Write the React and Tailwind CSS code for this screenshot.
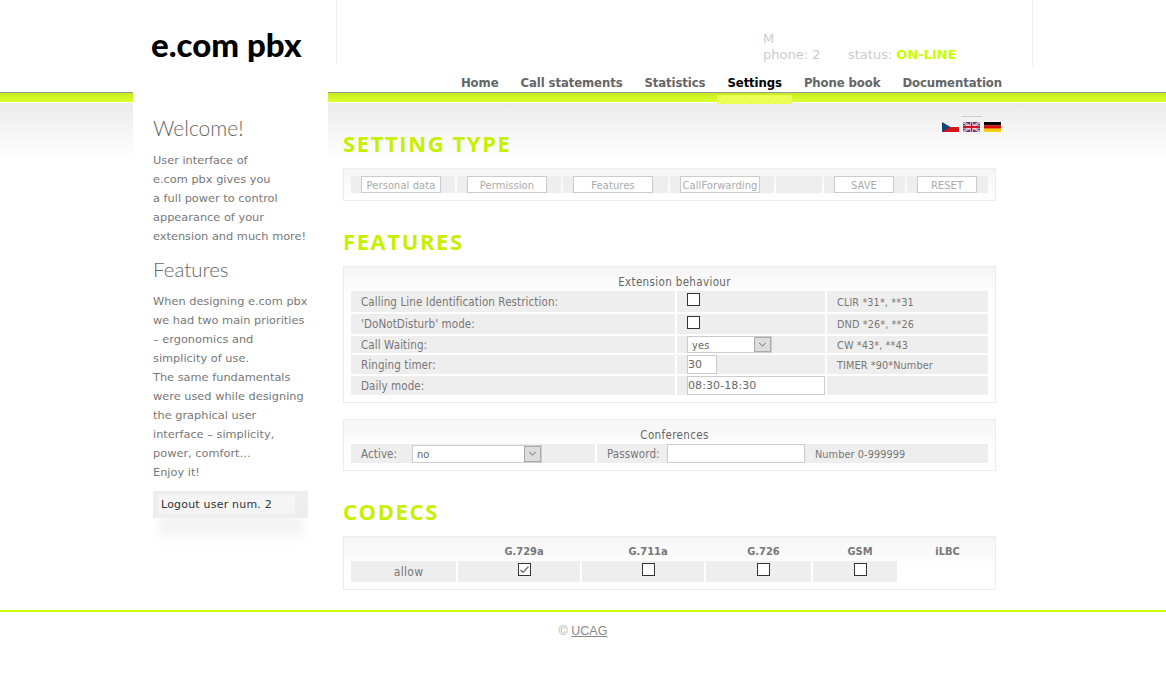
import React from "react";

const COND = "font-['DejaVu_Sans_Condensed','DejaVu_Sans',sans-serif]";

const Box = ({ checked }) => (
  <span className="block w-[13px] h-[13px] border border-[#333] bg-white">
    {checked && (
      <svg viewBox="0 0 11 11" className="block w-[11px] h-[11px]">
        <path d="M1.5 6 L4 8.5 L9.5 2.5" fill="none" stroke="#666" strokeWidth="1.2" />
      </svg>
    )}
  </span>
);

const FakeSelect = ({ value, className }) => (
  <div className={`flex items-center bg-white border border-[#ccc] ${className}`}>
    <span className="flex-1 pl-[4px] pt-[1px] text-[11px] text-[#666]">{value}</span>
    <span className="flex items-center justify-center w-[17px] h-full bg-[#ddd] border border-[#aaa]">
      <svg viewBox="0 0 10 6" className="w-[9px] h-[5px]">
        <path d="M1 1 L5 5 L9 1" fill="none" stroke="#555" strokeWidth="1" />
      </svg>
    </span>
  </div>
);

const Field = ({ value, className }) => (
  <input
    readOnly
    value={value}
    className={`bg-white border border-[#ccc] text-[11px] leading-[13px] text-[#666] px-0 outline-none font-['DejaVu_Sans',sans-serif] ${className}`}
  />
);

const Btn = ({ children, w }) => (
  <span className={`flex items-center justify-center h-[17px] pt-[2px] ${w} border border-[#ccc] bg-white ${COND} text-[11px] text-[#aaa]`}>{children}</span>
);

const Heading = ({ children, className }) => (
  <h2 className={`font-['Open_Sans',sans-serif] font-bold text-[22px] leading-[24px] tracking-[1.6px] text-[#c6f000] pb-[13px] ${className}`}>{children}</h2>
);

const Panel = ({ children, className = "" }) => (
  <div className={`border border-[#ececec] px-[7px] pb-[7px] bg-[linear-gradient(to_bottom,#f5f5f5_0,#fff_30px)] ${className}`}>{children}</div>
);

const PanelTitle = ({ children }) => (
  <div className={`pt-[9px] pb-[3px] pl-[10px] leading-[12px] ${COND} text-[11.5px] text-center text-[#666] tracking-[0.35px]`}>{children}</div>
);

const Cell = ({ children, className = "" }) => (
  <div className={`bg-[#eeeeee] pl-[10px] flex items-center text-[#777] ${COND} text-[11.5px] leading-[13px] tracking-[0.1px] ${className}`}>{children}</div>
);

const CZ = () => (
  <svg viewBox="0 0 17 10" className="w-[17px] h-[10px]">
    <rect width="17" height="5" fill="#f2f2f2" />
    <rect y="5" width="17" height="5" fill="#d7141a" />
    <path d="M0 0 L8.5 5 L0 10Z" fill="#11457e" />
  </svg>
);
const UK = () => (
  <svg viewBox="0 0 17 10" className="w-[17px] h-[10px]">
    <rect width="17" height="10" fill="#2a3f85" />
    <path d="M0 0 L17 10 M17 0 L0 10" stroke="#fff" strokeWidth="2" />
    <path d="M0 0 L17 10 M17 0 L0 10" stroke="#cf142b" strokeWidth="0.7" />
    <path d="M8.5 0 V10 M0 5 H17" stroke="#fff" strokeWidth="3.2" />
    <path d="M8.5 0 V10 M0 5 H17" stroke="#cf142b" strokeWidth="1.8" />
  </svg>
);
const DE = () => (
  <svg viewBox="0 0 17 10" className="w-[17px] h-[10px]">
    <rect width="17" height="3.4" fill="#000" />
    <rect y="3.4" width="17" height="3.3" fill="#dd0000" />
    <rect y="6.7" width="17" height="3.3" fill="#ffce00" />
  </svg>
);

const nav = ["Home", "Call statements", "Statistics", "Settings", "Phone book", "Documentation"];

const featureRows = [
  { h: "h-[21px]", pt: "pt-[1px]", label: "Calling Line Identification Restriction:", ctrl: <Box />, top: true, hint: "CLIR *31*, **31" },
  { h: "h-[20px]", pt: "pt-[1px]", label: "'DoNotDisturb' mode:", ctrl: <Box />, top: true, hint: "DND *26*, **26" },
  { h: "h-[17px]", pt: "pt-[2px]", label: "Call Waiting:", ctrl: <FakeSelect value="yes" className="w-[85px] h-[17px]" />, hint: "CW *43*, **43" },
  { h: "h-[19px]", pt: "pt-[2px]", label: "Ringing timer:", ctrl: <Field value="30" className="w-[30px] h-[19px]" />, hint: "TIMER *90*Number" },
  { h: "h-[19px]", pt: "pt-[2px]", label: "Daily mode:", ctrl: <Field value="08:30-18:30" className="w-[138px] h-[19px]" />, hint: "" },
];

const codecCols = [
  ["w-[105px]", "", null],
  ["w-[122px]", "G.729a", true],
  ["w-[122px]", "G.711a", false],
  ["w-[105px]", "G.726", false],
  ["w-[84px]", "GSM", false],
];

const para1 = ["User interface of", "e.com pbx gives you", "a full power to control", "appearance of your", "extension and much more!"];
const para2 = [
  "When designing e.com pbx",
  "we had two main priorities",
  "– ergonomics and",
  "simplicity of use.",
  "The same fundamentals",
  "were used while designing",
  "the graphical user",
  "interface – simplicity,",
  "power, comfort…",
  "Enjoy it!",
];

export default function App() {
  return (
    <div className="min-h-[691px] bg-white font-['DejaVu_Sans',sans-serif]">
      {/* Header */}
      <header className="relative z-10 w-[900px] mx-auto h-[92px] flex flex-col">
        <div className="h-[67px] flex">
          <div className="w-[204px] h-[64px] border-r border-[#eeeeee] pl-[18px] pt-[24px]">
            <span className="font-['Lato',sans-serif] font-black text-[33px] leading-[40px] text-black block">e.com pbx</span>
          </div>
          <div className="w-[696px] border-r border-[#eeeeee] pl-[426px] pt-[31px] text-[13px] leading-[15px] text-[#cccccc]">
            <div>M</div>
            <div className="flex mt-px">
              <span className="w-[85px]">phone: 2</span>
              <span>status: </span>
              <span className="ml-[4px] font-bold text-[#c8ff00]">ON-LINE</span>
            </div>
          </div>
        </div>
        <nav className="flex-1 flex justify-end gap-[22px] pr-[31px] pt-[7px]">
          {nav.map((n) => (
            <a key={n} className={`relative ${COND} text-[13px] leading-[17px] font-bold tracking-[-0.1px] ${n === "Settings" ? "text-black" : "text-[#666666]"}`}>
              {n}
              {n === "Settings" && (
                <span className="absolute left-[-10px] right-[-10px] top-[21px] h-[9px] bg-[repeating-linear-gradient(135deg,#eeff5c_0,#eeff5c_3px,#eafd52_3px,#eafd52_6px)]" />
              )}
            </a>
          ))}
        </nav>
      </header>

      {/* Main */}
      <div className="bg-[linear-gradient(to_bottom,#999_0,#999_1px,#c4ec1e_1px,#dcff2e_10px,#fff_10px,#fff_11px,#ebebeb_11px,#fff_66px)]">
        <div className="w-[900px] mx-auto flex h-[518px]">
          {/* Sidebar */}
          <aside className="w-[195px] bg-white pl-[20px] pt-[22px] text-[11.35px] leading-[19px] text-[#777777]">
            <h3 className="font-['Lato',sans-serif] font-light text-[21px] leading-[28px] text-[#666] mb-[9px]">Welcome!</h3>
            {para1.map((t) => <div key={t}>{t}</div>)}
            <h3 className="font-['Lato',sans-serif] font-light text-[20.5px] leading-[28px] text-[#666] mt-[9px] mb-[9px]">Features</h3>
            {para2.map((t) => <div key={t}>{t}</div>)}
            <div className="mt-[9px] w-[155px] h-[27px] bg-[#eeeeee] pl-[5px] pt-[4px]">
              <div className="w-[137px] h-[19px] bg-[#f5f5f5] pl-[3px] text-[11px] leading-[19px] text-[#333] tracking-[0.2px]">Logout user num. 2</div>
            </div>
            <div className="w-[145px] ml-[5px] h-[26px] bg-[linear-gradient(to_bottom,#ececec,#fff)] blur-[5px]" />
          </aside>

          {/* Content */}
          <main className="w-[705px] pl-[15px] pr-[37px] pt-[24px]">
            <div className="relative h-[16px] flex items-end justify-end gap-[4px] mr-[-5px]">
              <CZ />
              <span className="relative">
                <span className="absolute left-[-2px] right-[-2px] top-[-6px] h-px bg-[#cccccc]" />
                <UK />
              </span>
              <DE />
            </div>

            <Heading className="-mt-px">SETTING TYPE</Heading>
            <Panel className="pt-[7px]">
              <div className="flex gap-[2px]">
                {[
                  ["w-[104px]", "Personal data", "w-[80px]"],
                  ["w-[104px]", "Permission", "w-[80px]"],
                  ["w-[105px]", "Features", "w-[80px]"],
                  ["w-[104px]", "CallForwarding", "w-[80px]"],
                  ["w-[46px]", "", ""],
                  ["w-[81px]", "SAVE", "w-[60px]"],
                  ["w-[81px]", "RESET", "w-[60px]"],
                ].map(([w, t, bw], i) => (
                  <Cell key={i} className={`${w} h-[17px]`}>{t && <Btn w={bw}>{t}</Btn>}</Cell>
                ))}
              </div>
            </Panel>

            <Heading className="pt-[28px]">FEATURES</Heading>
            <Panel>
              <PanelTitle>Extension behaviour</PanelTitle>
              <div className="flex flex-col gap-[2px]">
                {featureRows.map((r) => (
                  <div key={r.label} className={`grid grid-cols-[324px_148px_161px] gap-[2px] ${r.h}`}>
                    <Cell className={r.pt}>{r.label}</Cell>
                    <Cell className={r.top ? "items-start pt-[2px]" : ""}>{r.ctrl}</Cell>
                    <Cell className={r.pt}><span className="text-[10.8px]">{r.hint}</span></Cell>
                  </div>
                ))}
              </div>
            </Panel>

            <Panel className="mt-[16px]">
              <PanelTitle>Conferences</PanelTitle>
              <div className="flex gap-[2px] h-[19px]">
                <Cell className="w-[244px]">
                  <span className="w-[51px] pt-[2px]">Active:</span>
                  <FakeSelect value="no" className="w-[130px] h-[18px]" />
                </Cell>
                <Cell className="w-[391px]">
                  <span className="w-[60px] pt-[2px]">Password:</span>
                  <Field value="" className="w-[138px] h-[19px] mr-[10px]" />
                  <span className="pt-[2px] text-[10.8px]">Number 0-999999</span>
                </Cell>
              </div>
            </Panel>

            <Heading className="pt-[28px]">CODECS</Heading>
            <Panel>
              <div className="flex gap-[2px]">
                {codecCols.map(([w, t]) => (
                  <div key={t} className={`${w} pl-[10px] pt-[9px] pb-[3px] leading-[12px] text-center ${COND} text-[11px] font-bold text-[#777]`}>{t}</div>
                ))}
                <div className={`flex-1 pt-[9px] pb-[3px] pl-[8px] leading-[12px] text-center ${COND} text-[11px] font-bold text-[#777]`}>iLBC</div>
              </div>
              <div className="flex gap-[2px] h-[21px]">
                {codecCols.map(([w, t, c]) => (
                  <Cell key={t} className={`${w} justify-center ${t ? "items-start pt-[2px]" : "pt-[2px] text-[12px] tracking-[0.3px]"}`}>
                    {t ? <Box checked={c} /> : "allow"}
                  </Cell>
                ))}
              </div>
            </Panel>
          </main>
        </div>
      </div>

      {/* Footer */}
      <footer className="border-t-2 border-[#ccff00] pt-[11px] text-center text-[12.5px] leading-[16px] font-['Liberation_Sans',sans-serif] text-[#aaaaaa]">
        © <a className="underline text-[#888888]">UCAG</a>
      </footer>
    </div>
  );
}
